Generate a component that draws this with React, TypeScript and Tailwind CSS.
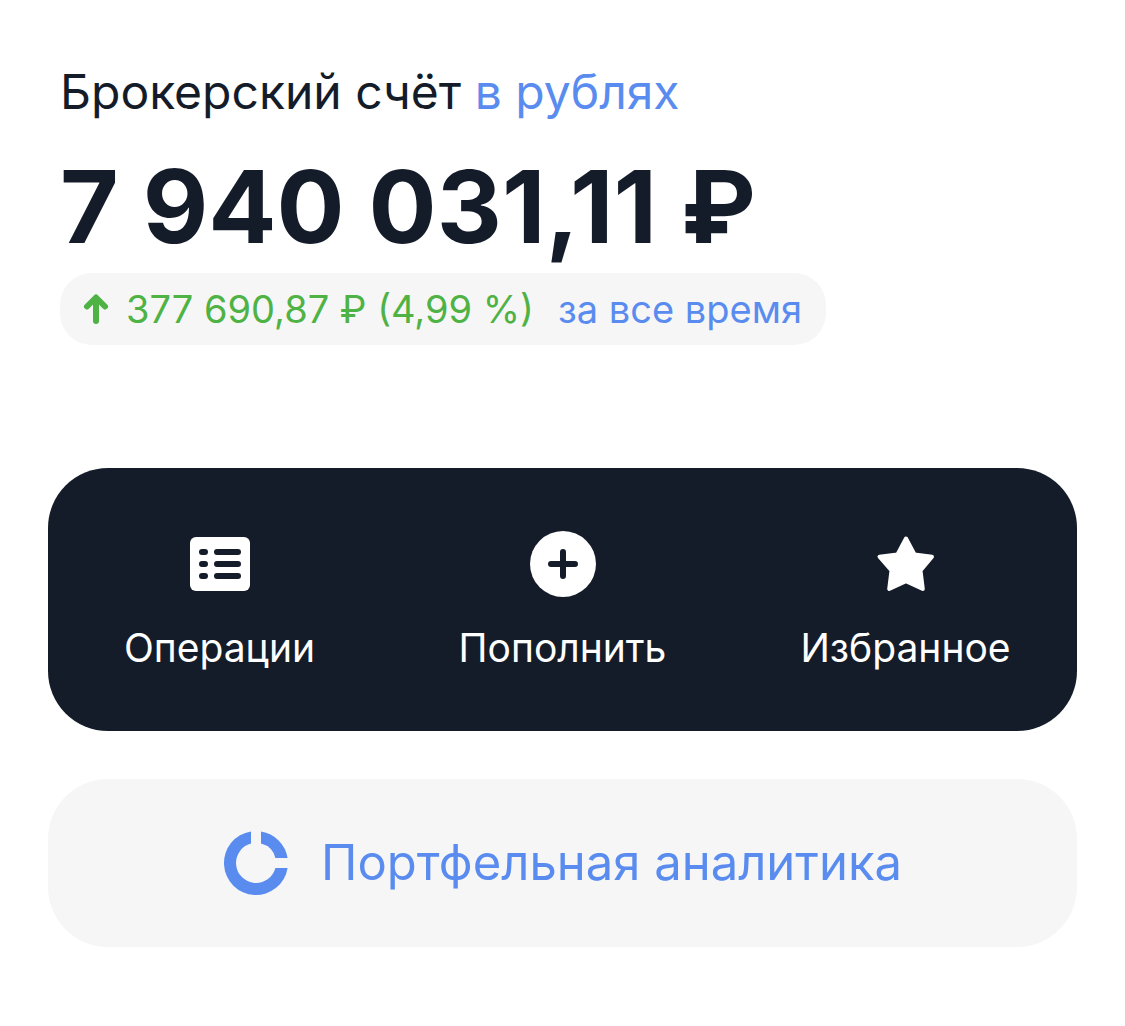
import type { ReactNode } from 'react';

const actions: { label: string; icon: ReactNode }[] = [
  { label: 'Операции', icon: <ListIcon /> },
  { label: 'Пополнить', icon: <PlusIcon /> },
  { label: 'Избранное', icon: <StarIcon /> },
];

function ArrowUpIcon() {
  return (
    <svg width="32" height="32" viewBox="0 0 32 32" fill="none" stroke="#4fb245" strokeWidth="6" strokeLinecap="round" strokeLinejoin="round" aria-hidden="true">
      <path d="M16 28V5M7 13.500L16 4.500l9 9" />
    </svg>
  );
}

function ListIcon() {
  return (
    <svg width="72" height="72" viewBox="0 0 72 72" aria-hidden="true">
      <rect x="6" y="9" width="60" height="54" rx="6" fill="#fff" />
      <g stroke="#151c29" strokeWidth="6" strokeLinecap="round">
        <path d="M18 24h3M33 24h21M18 36h3M33 36h21M18 48h3M33 48h21" />
      </g>
    </svg>
  );
}

function PlusIcon() {
  return (
    <svg width="72" height="72" viewBox="0 0 72 72" aria-hidden="true">
      <circle cx="36" cy="36" r="33" fill="#fff" />
      <path d="M36 24v24M24 36h24" stroke="#151c29" strokeWidth="6" strokeLinecap="round" />
    </svg>
  );
}

function StarIcon() {
  return (
    <svg width="72" height="72" viewBox="0 0 72 72" aria-hidden="true">
      <path
        d="M36 10.500L44.500 26.500 62 28.800 50.500 42.500 52.800 61 36 53.300 19.200 61 21.500 42.500 9.500 28.800 27.500 26.500z"
        fill="#fff"
        stroke="#fff"
        strokeWidth="4"
        strokeLinejoin="round"
      />
    </svg>
  );
}

function ChartIcon() {
  return (
    <svg width="66" height="66" viewBox="0 0 66 66" fill="#5a8cf0" aria-hidden="true">
      <path d="M28 1.400A32 32 0 1 0 64.600 38H52.400A20 20 0 1 1 28 13.600z" />
      <path d="M38 1.400A32 32 0 0 1 64.600 28H52.400A20 20 0 0 0 38 13.600z" />
    </svg>
  );
}

export default function App() {
  return (
    <main className="min-h-screen bg-white px-12 pt-16 pb-20 font-['Inter','Liberation_Sans',sans-serif] text-[#151c29]">
      <header className="flex flex-col items-start px-3">
        <h1 className="text-[48px] leading-14">
          Брокерский счёт{' '}
          <button type="button" className="text-[#5a8cf0]">в рублях</button>
        </h1>
        <p className="mt-8 text-[101px] leading-[109px] font-bold">7 940 031,11 ₽</p>
        <div className="mt-3 flex h-18 items-center rounded-[32px] bg-[#f6f6f6] pr-6 pl-5 text-[38px] text-[#4fb245]">
          <ArrowUpIcon />
          <span className="ml-3.5">377 690,87 ₽ (4,99 %)</span>
          <button type="button" className="ml-6 text-[#5a8cf0]">за все время</button>
        </div>
      </header>

      <nav className="mt-[123px] grid grid-cols-3 rounded-[60px] bg-[#151c29] pt-15 pb-[59px] text-[39px] text-white">
        {actions.map(({ label, icon }) => (
          <button key={label} type="button" className="flex flex-col items-center gap-6">
            {icon}
            <span className="leading-12">{label}</span>
          </button>
        ))}
      </nav>

      <button type="button" className="mt-12 flex h-42 w-full items-center justify-center gap-8 rounded-[60px] bg-[#f6f6f6] text-[49px] text-[#5a8cf0]">
        <ChartIcon />
        Портфельная аналитика
      </button>
    </main>
  );
}
